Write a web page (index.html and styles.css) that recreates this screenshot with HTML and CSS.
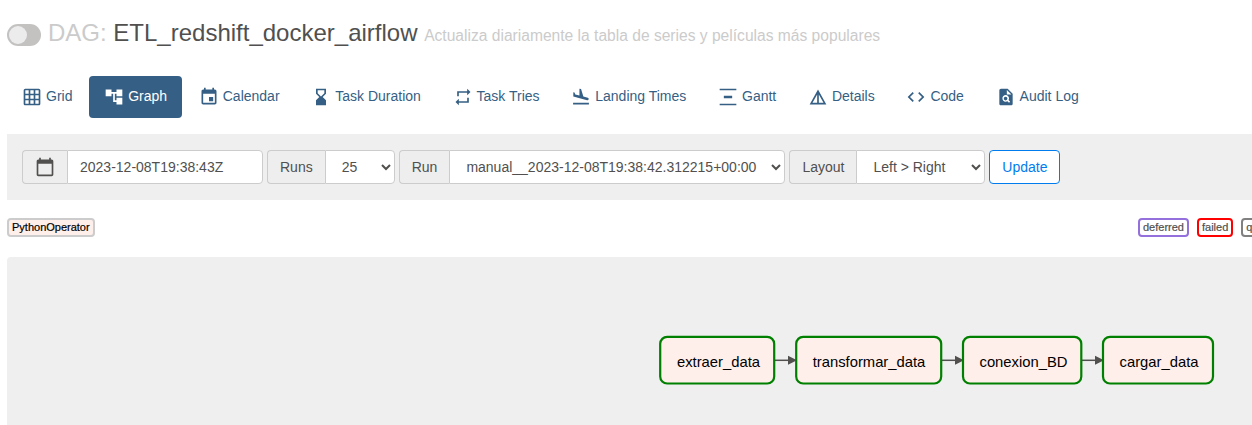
FILE: index.html
```html
<!DOCTYPE html>
<html lang="en">
<head>
<meta charset="utf-8">
<title>ETL_redshift_docker_airflow - Graph</title>
<link rel="stylesheet" href="styles.css">
</head>
<body>
<header class="dag-header">
  <span class="switch"><span class="knob"></span></span>
  <h3 class="dag-title"><span class="muted">DAG:</span> ETL_redshift_docker_airflow <small class="muted">Actualiza diariamente la tabla de series y películas más populares</small></h3>
</header>
<nav class="tabs">
  <a class="tab"><svg class="icon" viewBox="0 0 24 24"><path d="M20 2H4c-1.100 0-2 .9-2 2v16c0 1.100.9 2 2 2h16c1.100 0 2-.9 2-2V4c0-1.100-.9-2-2-2zM8 20H4v-4h4v4zm0-6H4v-4h4v4zm0-6H4V4h4v4zm6 12h-4v-4h4v4zm0-6h-4v-4h4v4zm0-6h-4V4h4v4zm6 12h-4v-4h4v4zm0-6h-4v-4h4v4zm0-6h-4V4h4v4z"/></svg>Grid</a>
  <a class="tab active"><svg class="icon" viewBox="0 0 24 24"><path d="M22 11V3h-7v3H9V3H2v8h7V8h2v10h4v3h7v-8h-7v3h-2V8h2v3z"/></svg>Graph</a>
  <a class="tab"><svg class="icon" viewBox="0 0 24 24"><path d="M17 12h-5v5h5v-5zM16 1v2H8V1H6v2H5c-1.110 0-1.990.9-1.990 2L3 19c0 1.100.89 2 2 2h14c1.100 0 2-.9 2-2V5c0-1.100-.9-2-2-2h-1V1h-2zm3 18H5V8h14v11z"/></svg>Calendar</a>
  <a class="tab"><svg class="icon" viewBox="0 0 24 24"><path d="M18 22l-.01-6L14 12l3.990-4.010L18 2H6v6l4 4-4 3.990V22h12zM8 7.500V4h8v3.500l-4 4-4-4z"/></svg>Task Duration</a>
  <a class="tab"><svg class="icon" viewBox="0 0 24 24"><path d="M7 7h10v3l4-4-4-4v3H5v6h2V7zm10 10H7v-3l-4 4 4 4v-3h12v-6h-2v4z"/></svg>Task Tries</a>
  <a class="tab"><svg class="icon" viewBox="0 0 24 24"><path d="M2.500 19h19v2h-19zM19.340 15.850c.8.210 1.620-.26 1.840-1.060.21-.8-.26-1.620-1.060-1.840l-5.310-1.420-2.760-9.020L10.120 2v8.280L5.150 8.950l-.93-2.320-1.450-.39v5.170l16.570 4.440z"/></svg>Landing Times</a>
  <a class="tab"><svg class="icon" viewBox="0 0 24 24"><path d="M22 2v2H2V2h20zM7 10.500v3h10v-3H7zM2 20v2h20v-2H2z"/></svg>Gantt</a>
  <a class="tab"><svg class="icon" viewBox="0 0 24 24"><path d="M12 3L2 21h20L12 3zM13 8.920L18.600 19H13V8.920zM11 8.920V19H5.400L11 8.920z"/></svg>Details</a>
  <a class="tab"><svg class="icon" viewBox="0 0 24 24"><path d="M9.400 16.600L4.800 12l4.600-4.600L8 6l-6 6 6 6 1.400-1.400zm5.200 0l4.600-4.600-4.600-4.600L16 6l6 6-6 6-1.400-1.400z"/></svg>Code</a>
  <a class="tab"><svg class="icon" viewBox="0 0 24 24"><path fill-rule="evenodd" d="M14 2H6c-1.100 0-2 .9-2 2v16c0 1.100.9 2 2 2h12c1.100 0 2-.9 2-2V8l-6-6zM13 9V3.500L18.500 9H13zM15.600 19L13.700 17.100A4 4 0 1 1 15.100 15.700L17 17.600zM11.500 11.700a2.200 2.200 0 1 0 0 4.400a2.200 2.200 0 1 0 0-4.400z"/></svg>Audit Log</a>
</nav>
<form class="toolbar">
  <div class="group">
    <span class="addon"><svg class="icon" viewBox="0 0 24 24"><path d="M20 3h-1V1h-2v2H7V1H5v2H4c-1.100 0-2 .9-2 2v16c0 1.100.9 2 2 2h16c1.100 0 2-.9 2-2V5c0-1.100-.9-2-2-2zm0 18H4V8h16v13z"/></svg></span>
    <input class="control date" type="text" value="2023-12-08T19:38:43Z">
  </div>
  <div class="group">
    <span class="addon">Runs</span>
    <select class="control count"><option>25</option></select>
  </div>
  <div class="group">
    <span class="addon">Run</span>
    <select class="control run"><option>manual__2023-12-08T19:38:42.312215+00:00</option></select>
  </div>
  <div class="group">
    <span class="addon">Layout</span>
    <select class="control layout"><option>Left &gt; Right</option></select>
  </div>
  <button class="update" type="button">Update</button>
</form>
<div class="legend">
  <span class="operator">PythonOperator</span>
  <div class="states">
    <span class="state deferred">deferred</span>
    <span class="state failed">failed</span>
    <span class="state queued">queued</span>
  </div>
</div>
<main class="graph">
  <svg class="dag" width="1245" height="168" viewBox="7 257 1245 168">
    <g class="edge">
      <path d="M775 360.300H790"/><path d="M942 360.300H957"/><path d="M1082 360.300H1097"/>
    </g>
    <g class="arrow">
      <path d="M788 355.800l9 4.500-9 4.500z"/><path d="M955 355.800l9 4.500-9 4.500z"/><path d="M1095 355.800l9 4.500-9 4.500z"/>
    </g>
    <g class="node">
      <rect x="660.200" y="336.800" width="114" height="46.700" rx="7"/>
      <rect x="796.200" y="336.800" width="145" height="46.700" rx="7"/>
      <rect x="963" y="336.800" width="118.300" height="46.700" rx="7"/>
      <rect x="1103" y="336.800" width="110" height="46.700" rx="7"/>
    </g>
    <g class="label">
      <text x="718.500" y="367">extraer_data</text>
      <text x="869" y="367">transformar_data</text>
      <text x="1023.500" y="367">conexion_BD</text>
      <text x="1159" y="367">cargar_data</text>
    </g>
  </svg>
</main>
</body>
</html>
```

FILE: styles.css
```css
* { box-sizing: border-box; }

body {
  margin: 0;
  padding-left: 7px;
  height: 425px;
  overflow: hidden;
  background: #fff;
  color: #51504f;
  font: 14px/20px "Liberation Sans", Arial, sans-serif;
}

.dag-header {
  display: flex;
  align-items: center;
  gap: 7px;
  height: 76px;
  padding-bottom: 6px;
}

.switch {
  width: 34px;
  height: 22px;
  padding: 2px;
  border-radius: 11px;
  background: #c4c2c1;
}

.knob {
  display: block;
  width: 18px;
  height: 18px;
  border-radius: 50%;
  background: #edecec;
}

.dag-title {
  margin: 0;
  padding-bottom: 2px;
  font-size: 24px;
  line-height: 28px;
  font-weight: 400;
  white-space: nowrap;
}

.dag-title small { font-size: 15.600px; }
.muted { color: #cbcbcb; }

.tabs { display: flex; gap: 1.700px; height: 42px; }

.tab {
  display: flex;
  align-items: center;
  gap: 4px;
  padding: 0 15px 2px;
  border-radius: 4px;
  color: #355f84;
  white-space: nowrap;
}

.tab.active { background: #355f84; color: #fff; }

.icon { width: 20px; height: 20px; fill: currentColor; flex: none; }

.tab .icon { margin-top: 2px; }

.toolbar {
  display: flex;
  align-items: center;
  gap: 4px;
  height: 66px;
  margin-top: 16px;
  padding: 0 15px;
  background: #efefef;
}

.group { display: flex; height: 34px; }

.addon {
  display: flex;
  align-items: center;
  padding: 0 12px;
  border: 1px solid #ccc;
  border-right: 0;
  border-radius: 4px 0 0 4px;
  background: #eee;
}

.control {
  height: 34px;
  margin: 0;
  padding: 6px 12px;
  border: 1px solid #ccc;
  border-radius: 0 4px 4px 0;
  background: #fff;
  color: #51504f;
  font: inherit;
}

.date { width: 196px; }
.count { width: 70px; }
.run { width: 336px; }
.layout { width: 129px; }
select.control { padding-right: 0; }

.update {
  width: 71px;
  height: 34px;
  padding: 0;
  border: 1px solid #017cee;
  border-radius: 4px;
  background: #fff;
  color: #017cee;
  font: inherit;
}

.legend {
  display: flex;
  justify-content: space-between;
  align-items: center;
  height: 57px;
  padding-bottom: 2px;
  font-size: 11px;
}

.operator, .state {
  height: 19px;
  padding: 0 3px;
  border: 2px solid #ccc;
  border-radius: 4px;
  line-height: 15px;
  -webkit-text-stroke: 0.200px currentColor;
}

.operator { background: #ffefeb; color: #000; }

.states { display: flex; gap: 8px; width: 114px; overflow: hidden; }
.state { flex: none; }
.deferred { border-color: mediumpurple; }
.failed { border-color: red; }
.queued { border-color: gray; }

.graph { height: 168px; border-radius: 4px 0 0; background: #efefef; }
.dag { display: block; }
.edge { stroke: #51504f; stroke-width: 1.500; }
.arrow { fill: #51504f; }
.node { fill: #ffefeb; stroke: green; stroke-width: 2.200; }
.label { font-size: 14.800px; text-anchor: middle; fill: #000; }
```
